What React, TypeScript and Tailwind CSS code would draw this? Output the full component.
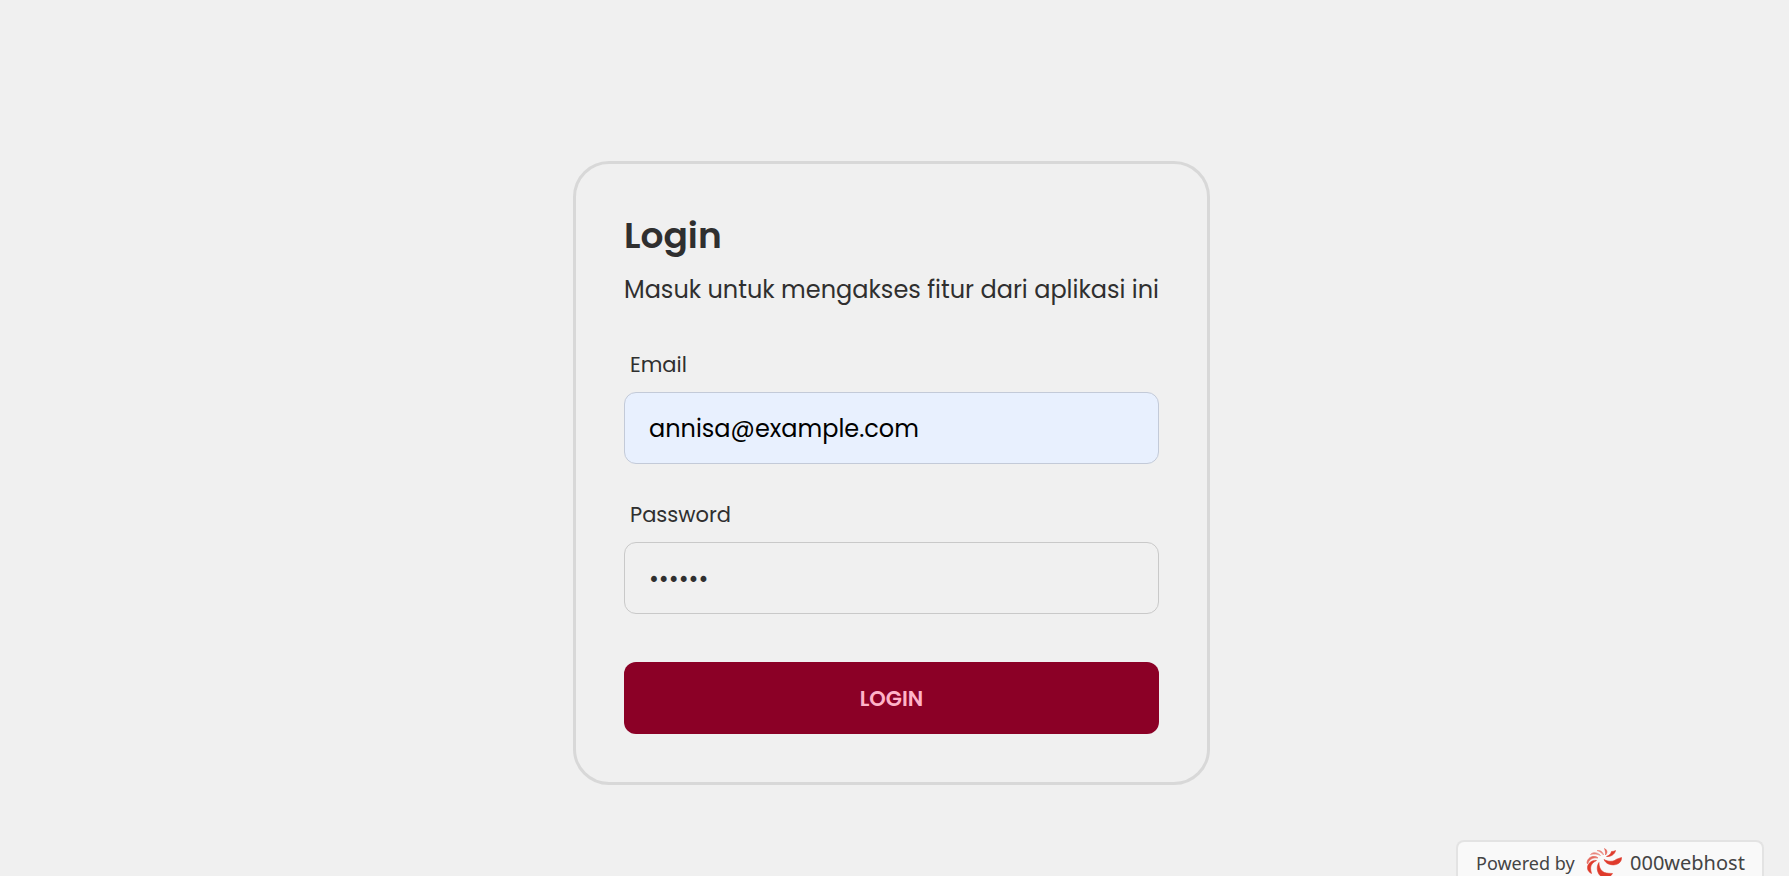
import { useState } from "react";

function SwirlLogo() {
  return (
    <svg
      viewBox="0 0 36 30"
      className="h-[30px] w-9 shrink-0"
      fill="#df3a2b"
      stroke="#df3a2b"
      strokeWidth="0.6"
      strokeLinejoin="round"
      aria-hidden="true"
    >
      <path d="M35.500 9.500C36 15.500 29 18.500 22.500 16C20.500 15.200 19 13.800 18 11.500C22 14 28 13.800 30 11.500C31.500 10.500 34 10.300 35.500 9.500Z" />
      <path d="M26.500 25.500C23.500 31 16.500 31 13.200 26.500C10.800 23 10.500 18 13 14.500C12.800 19 14.800 23 18.500 24.500C21 25.500 24 25.300 26.500 25.500Z" />
      <path d="M29.500 2.500C29 6 25 9 20.500 8.500C23.500 7.300 24.800 6 25.500 3.500C27 3.500 28.500 3.200 29.500 2.500Z" />
      <path d="M5.500 25.500C1 23.500 0.500 18.500 3 15.500C5 13 8 12 10.500 12.500C6.800 14.200 4.600 17 4.600 20C4.600 22 5 23.800 5.500 25.500Z" />
      <path d="M1 14.500C1.500 10.500 5 8.300 8 8.300C9.800 8.300 11 9 12 10C7.500 9.300 4.400 10.800 2.800 13.500L1.500 16Z" opacity="0.75" />
      <path d="M4.500 6.500C6.500 4 11 3.800 14.500 7.500C11.500 6 8 5.800 4.500 6.500Z" opacity="0.6" />
      <path d="M11 2.500C13.500 2 17 3.300 17.500 7C16 5 14 3.500 11 2.500Z" opacity="0.6" />
      <path d="M18.500 0.500C21.500 2 21.500 5 19.500 7C19.700 4.500 19.500 2.800 18.500 0.500Z" opacity="0.8" />
    </svg>
  );
}

export default function App() {
  const [email, setEmail] = useState("annisa@example.com");
  const [password, setPassword] = useState("123456");

  return (
    <div className="min-h-screen bg-[#f0f0f0] font-['Poppins','Inter',sans-serif] text-[#2f2f2f]">
      <main className="flex justify-center pt-[161px] pr-1.5">
        <form
          onSubmit={(event) => event.preventDefault()}
          className="flex flex-col rounded-[36px] border-3 border-[#d8d8d8] p-12"
        >
          <h1 className="text-[36px] leading-[48px] font-semibold">Login</h1>
          <p className="mt-3 text-[24px] leading-[36px]">
            Masuk untuk mengakses fitur dari aplikasi ini
          </p>

          <div className="mt-[43px] flex flex-col gap-[13px]">
            <label htmlFor="email" className="pl-1.5 text-[21px] leading-[28px]">
              Email
            </label>
            <input
              id="email"
              type="email"
              value={email}
              onChange={(event) => setEmail(event.target.value)}
              className="h-[72px] w-full rounded-xl border border-[#c3cad8] bg-[#e8f0fe] px-6 text-[24px] text-black outline-none"
            />
          </div>

          <div className="mt-[37px] flex flex-col gap-[13px]">
            <label htmlFor="password" className="pl-1.5 text-[21px] leading-[28px]">
              Password
            </label>
            <input
              id="password"
              type="password"
              value={password}
              onChange={(event) => setPassword(event.target.value)}
              className="h-[72px] w-full rounded-xl border border-[#c9c9c9] bg-transparent px-6 text-[24px] outline-none"
            />
          </div>

          <button
            type="submit"
            className="mt-12 h-[72px] w-full rounded-xl bg-[#8b0026] pt-0.5 text-[21px] font-semibold text-[#ffb3c8]"
          >
            LOGIN
          </button>
        </form>
      </main>

      <a
        href="#"
        className="fixed right-[25px] bottom-0 flex h-9 w-[308px] items-center gap-2 rounded-t-lg border-2 border-b-0 border-[#e3e3e3] bg-[#f9f9f9] pt-2 pl-[18px] font-['Noto_Sans',sans-serif] leading-6 text-[#444444]"
      >
        <span className="w-[102px] text-[18px]">Powered by</span>
        <SwirlLogo />
        <span className="text-[20px]">000webhost</span>
      </a>
    </div>
  );
}
